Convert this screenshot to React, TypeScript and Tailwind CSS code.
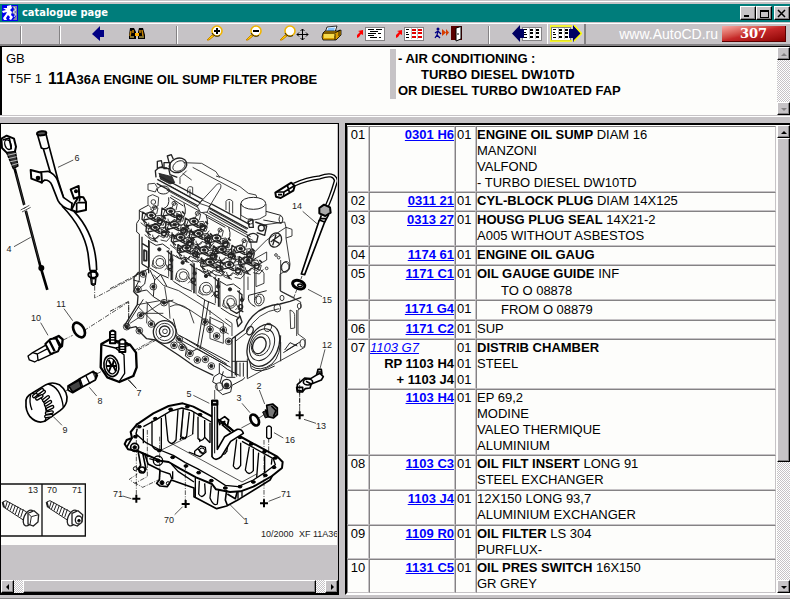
import React from "react";

type PartNo = { text: string; kind?: "link" | "alt" | "plain" };
type Part = {
  ref: string;
  numbers: PartNo[];
  height: string;
  title?: string;
  rest?: string;
  lines?: { text: string; indent?: boolean }[];
};

const parts: Part[] = [
  { ref: "01", numbers: [{ text: "0301 H6" }], height: "h-[66px]", title: "ENGINE OIL SUMP", rest: "DIAM 16", lines: [{ text: "MANZONI" }, { text: "VALFOND" }, { text: "- TURBO DIESEL DW10TD" }] },
  { ref: "02", numbers: [{ text: "0311 21" }], height: "h-[19px]", title: "CYL-BLOCK PLUG", rest: "DIAM 14X125" },
  { ref: "03", numbers: [{ text: "0313 27" }], height: "h-[35px]", title: "HOUSG PLUG SEAL", rest: "14X21-2", lines: [{ text: "A005 WITHOUT ASBESTOS" }] },
  { ref: "04", numbers: [{ text: "1174 61" }], height: "h-[19px]", title: "ENGINE OIL GAUG" },
  { ref: "05", numbers: [{ text: "1171 C1" }], height: "h-[35px]", title: "OIL GAUGE GUIDE", rest: "INF", lines: [{ text: "TO O 08878", indent: true }] },
  { ref: "", numbers: [{ text: "1171 G4" }], height: "h-[20px]", lines: [{ text: "FROM O 08879", indent: true }] },
  { ref: "06", numbers: [{ text: "1171 C2" }], height: "h-[19px]", rest: "SUP" },
  { ref: "07", numbers: [{ text: "1103 G7", kind: "alt" }, { text: "RP 1103 H4", kind: "plain" }, { text: "+ 1103 J4", kind: "plain" }], height: "h-[50px]", title: "DISTRIB CHAMBER", lines: [{ text: "STEEL" }] },
  { ref: "", numbers: [{ text: "1103 H4" }], height: "h-[66px]", rest: "EP 69,2", lines: [{ text: "MODINE" }, { text: "VALEO THERMIQUE" }, { text: "ALUMINIUM" }] },
  { ref: "08", numbers: [{ text: "1103 C3" }], height: "h-[35px]", title: "OIL FILT INSERT", rest: "LONG 91", lines: [{ text: "STEEL EXCHANGER" }] },
  { ref: "", numbers: [{ text: "1103 J4" }], height: "h-[35px]", rest: "12X150 LONG 93,7", lines: [{ text: "ALUMINIUM EXCHANGER" }] },
  { ref: "09", numbers: [{ text: "1109 R0" }], height: "h-[34px]", title: "OIL FILTER", rest: "LS 304", lines: [{ text: "PURFLUX-" }] },
  { ref: "10", numbers: [{ text: "1131 C5" }], height: "h-[34px]", title: "OIL PRES SWITCH", rest: "16X150", lines: [{ text: "GR GREY" }] },
];

const raised = "border border-t-white border-l-white border-b-black border-r-black bg-[#c6c3c6] shadow-[inset_-1px_-1px_#848284]";
const track = "bg-[repeating-conic-gradient(#ffffff_0_25%,#c6c3c6_0_50%)] bg-[length:2px_2px]";

function Triangle({ dir, color }: { dir: "up" | "down" | "left" | "right"; color: string }) {
  const d = { up: "M0 5L3 2L6 5Z", down: "M0 2H6L3 5Z", left: "M4 0V6L1 3Z", right: "M2 0V6L5 3Z" }[dir];
  return <svg width="6" height="6" viewBox="0 0 6 6" aria-hidden="true"><path d={d} fill={color} /></svg>;
}

function ScrollButton({ dir, off }: { dir: "up" | "down" | "left" | "right"; off?: boolean }) {
  return (
    <button aria-label={"Scroll " + dir} className={"flex size-[13px] shrink-0 items-center justify-center " + raised}>
      <Triangle dir={dir} color={off ? "#848284" : "#000"} />
    </button>
  );
}

/* ---------- toolbar icons ---------- */

function Magnifier({ sign }: { sign?: "plus" | "minus" }) {
  return (
    <g>
      <path d="M1 15L6 10L8 11L3 15Z" fill="#ffcf00" stroke="#c68200" strokeWidth="1" />
      <circle cx="11" cy="6" r="5" fill="#fff" stroke="#f0b400" strokeWidth="1.6" />
      <path d="M6 8A5.5 5.5 0 0 0 14 10.500" fill="none" stroke="#000" strokeWidth=".8" />
      {sign && <path d="M8 6H14" stroke="#000" strokeWidth="2" />}
      {sign === "plus" && <path d="M11 3V9" stroke="#000" strokeWidth="2" />}
    </g>
  );
}

function Sheet({ x, red }: { x: number; red?: boolean }) {
  const c = red ? "#e00000" : "#000";
  return (
    <g shapeRendering="crispEdges">
      <rect x={x} y="2" width="19" height="13" fill="#fff" stroke="#848284" />
      <path d={`M${x + 7} 3V14M${x + 13} 3V14`} stroke="#c6c3c6" />
      <path d={`M${x + 2} 4.500h3M${x + 2} 7h2M${x + 2} 9.500h3M${x + 2} 12h3`} stroke="#000" />
      <path d={`M${x + 8} 5h4M${x + 8} 8h4M${x + 8} 12h4M${x + 14} 5h4M${x + 14} 8h4M${x + 14} 12h4`} stroke={c} strokeWidth="1.600" strokeDasharray={red ? undefined : "3 1"} />
    </g>
  );
}

const redArrow = <path d="M1 13V10L4 7L2 6L7 5V10L5 9L3 12Z" fill="#f00" />;

const icons: Record<string, React.ReactNode> = {
  back: <path d="M9 9L17 1V5H21V12H17V16Z" fill="#000084" />,
  find: (
    <g>
      <path d="M8 3H12L14 7V14H7V10ZM17 3H21L23 10V14H16V7Z" fill="#000" />
      <path d="M9 6L8 11M11 5V8M18 5V8M20 5L21 11" stroke="#c68200" strokeWidth="1.500" />
      <path d="M13 8H17V11H13Z" fill="#ffb000" />
      <path d="M8 12H12M17 12H22" stroke="#ffdf63" />
    </g>
  ),
  zoomIn: <g transform="translate(6 0)"><Magnifier sign="plus" /></g>,
  zoomOut: <g transform="translate(6 0)"><Magnifier sign="minus" /></g>,
  zoomFit: (
    <g>
      <g transform="translate(1 0)"><Magnifier /></g>
      <path d="M24.500 4V15M19 9.500H30M22.500 6L24.500 4L26.500 6M22.500 13L24.500 15L26.500 13M21 7.500L19 9.500L21 11.500M28 7.500L30 9.500L28 11.500" fill="none" stroke="#000" />
    </g>
  ),
  print: (
    <g stroke="#000" strokeWidth=".8">
      <path d="M10 2L20 1L18 7L8 8Z" fill="#fff" />
      <path d="M11 3L18 2.500L17 6L10 6.500Z" fill="#84c3ff" stroke="none" />
      <path d="M6 8L8 6H21L24 5V10L19 15H6L5 12Z" fill="#d89b00" />
      <path d="M6 8H18L23 5" fill="none" />
      <path d="M7 10H18M7 12H17" stroke="#ffef63" strokeWidth="1.300" />
      <path d="M18 9V15M22 6V11" />
    </g>
  ),
  notes: (
    <g>
      {redArrow}
      <g shapeRendering="crispEdges">
        <rect x="9" y="2" width="19" height="13" fill="#fff" stroke="#848284" />
        <path d="M12 4.500H18M20 4.500H26M14 6.500H22M12 8.500H20M22 8.500H25M12 10.500H18M14 12.500H21M23 12.500H25" stroke="#000" />
      </g>
    </g>
  ),
  table: <g>{redArrow}<Sheet x={9} red /></g>,
  exit: (
    <g>
      <circle cx="4" cy="4" r="1.500" fill="#000084" />
      <path d="M1 8L4 6L7 9M4 6L3 10L6 13M3 10L1 13" fill="none" stroke="#000084" strokeWidth="1.300" />
      <path d="M8 4L12 7.500L8 11ZM12 4L15 7.500L12 11Z" fill="#d63c00" />
      <path d="M17 1H28V15H17Z" fill="#5a0000" />
      <path d="M22 3L27 1.500V14L22 16Z" fill="#fff" stroke="#000" />
      <path d="M23 9H25" stroke="#000" />
    </g>
  ),
  prev: <g><Sheet x={10} /><path d="M0 8.500L8 0V4H12V13H8V17Z" fill="#000063" /></g>,
  next: <g><g><Sheet x={1} /></g><path d="M31 8.500L23 0V4H19V13H23V17Z" fill="#000063" /><path d="M0 1H22M0 1V16H22M24 0L31.500 8.500L24 16" fill="none" stroke="#ff0" strokeWidth="1.500" /></g>,
};

function Tool({ icon, label, active }: { icon: string; label: string; active?: boolean }) {
  return (
    <button aria-label={label} className={"flex h-full w-[39px] shrink-0 items-center justify-center " + (active ? "border-l border-r-2 border-l-white border-r-[#848284] bg-[#cecbce]" : "")}>
      <svg width="32" height="18" viewBox="0 0 32 18" aria-hidden="true">{icons[icon]}</svg>
    </button>
  );
}

function Separator() {
  return (
    <div className="flex h-full w-[39px] shrink-0 justify-center pt-0.5">
      <div className="w-0.5 border-l border-r border-l-[#848284] border-r-white" />
    </div>
  );
}

/* ---------- exploded view ---------- */

const labels: [string, number, number][] = [
  ["6", 77, 158], ["4", 9, 249], ["14", 297, 206], ["15", 327, 300], ["11", 61, 304], ["10", 36, 318],
  ["7", 139, 393], ["8", 100, 401], ["9", 65, 430], ["12", 327, 345], ["5", 189, 394], ["3", 239, 398],
  ["2", 259, 386], ["13", 321, 426], ["16", 290, 440], ["71", 118, 494], ["71", 286, 494], ["70", 169, 520],
  ["1", 246, 521], ["13", 33, 490], ["70", 52, 490], ["71", 77, 490],
];

function Injector({ x, y }: { x: number; y: number }) {
  return (
    <g transform={`translate(${x} ${y})`}>
      <path d="M-30 8L-22 -14L-4 -20L8 -6L22 -8L30 8L20 24L4 16L-8 28L-24 22Z" />
      <ellipse cx="-6" cy="-8" rx="13" ry="9" strokeWidth="4" />
      <ellipse cx="-6" cy="-8" rx="6" ry="4" fill="#222" />
      <path d="M-2 -18L4 -34L14 -30L10 -12" />
      <circle cx="4" cy="-32" r="6" />
      <path d="M-28 6L-10 2L6 10L28 6M-20 -10L-32 -18L-34 4L-20 16" strokeWidth="4" />
      <path d="M12 -2L34 8L30 22L12 16Z" />
      <circle cx="20" cy="10" r="7" strokeWidth="4" />
      <path d="M-14 14A9 9 0 1 0 4 18M-38 14L-18 30L2 36M10 30L28 34L40 20" />
      <path d="M-4 -2L8 6M-12 24L-4 34M28 -8L36 0" strokeWidth="5" />
    </g>
  );
}

function Port({ x, y }: { x: number; y: number }) {
  return (
    <g transform={`translate(${x} ${y})`}>
      <path d="M-30 -62V16M28 -36V44" />
      <path d="M-30 -62L-10 -50L10 -54L32 -38M-28 18L0 36L28 48" strokeWidth="3" />
      <circle r="19" />
      <circle cx="2" cy="1" r="12" />
      <path d="M-18 -6L-22 12L-8 20M18 4L24 16L16 24" />
      <circle cx="0" cy="-38" r="5" fill="#222" />
      <circle cx="32" cy="14" r="6" strokeWidth="4" />
      <circle cx="36" cy="-6" r="5" fill="#444" />
      <path d="M22 -34L36 -22L34 -6M24 20L40 30" strokeWidth="4" />
    </g>
  );
}

function Engine() {
  return (
    <>
      <g transform="translate(120 140) scale(.33333)" fill="none" stroke="#222" strokeWidth="2.600" strokeLinejoin="round">
        {/* camshaft cover */}
        <path d="M190 68L245 70L288 95L296 108L360 140L385 160L408 165L412 178" />
        <path d="M188 100L215 120M218 82L350 152M200 92L180 112V132M300 112L288 108M362 190V240" />
        <ellipse cx="174" cy="76" rx="27" ry="21" strokeWidth="4" transform="rotate(-22 174 76)" />
        <ellipse cx="177" cy="78" rx="20" ry="14" transform="rotate(-32 177 78)" />
        <path d="M148 70L142 48L154 44L160 58M146 85L150 104L172 112M132 68H150V86H132Z" strokeWidth="4" />
        <path d="M108 112L106 92L118 82L142 84M112 64L124 62L128 80L112 86Z" strokeWidth="4" />
        <path d="M84 132L104 130L112 142L106 156L84 150ZM84 170L98 164L116 172L114 198L94 204L84 194Z" />
        <circle cx="100" cy="186" r="7" /><ellipse cx="130" cy="150" rx="18" ry="12" strokeWidth="3" />
        <path d="M116 100L156 110L164 128L150 132L120 116" fill="#333" />
        {/* rail */}
        <path d="M118 108L390 254M112 118L384 266M110 130L235 198M268 214L382 278" strokeWidth="4" />
        <path d="M150 138L236 186M264 204L380 268M140 150L392 290M152 166L400 302" />
        <path d="M238 190L292 132Q306 128 302 144L268 200ZM232 200L246 180L272 192L262 216L242 218Z" fill="#fff" />
        <path d="M203 160V146Q206 136 218 142V164M318 210V184Q326 172 338 184V220M210 148V170M328 184V218" />
        {/* filler cap and outlet */}
        <path d="M363 192V226Q400 254 438 226V192" fill="#fff" />
        <ellipse cx="400" cy="190" rx="37" ry="18" fill="#fff" strokeWidth="3" />
        <path d="M438 214L482 226Q494 236 484 250L430 240M482 226Q472 238 482 250" strokeWidth="3" />
        <path d="M384 246L398 238L400 262H388ZM382 288Q400 272 414 288L410 306H388ZM406 246L440 258L434 286L410 278" strokeWidth="4" />
        <circle cx="392" cy="244" r="8" /><circle cx="424" cy="264" r="9" strokeWidth="4" />
        {/* cylinder head ends */}
        <path d="M84 196L58 210V238L50 250V276L58 282V420L40 455M90 206L100 214M58 212L82 226" strokeWidth="3" />
        <path d="M430 255L494 246L498 262L516 268V288L498 294L510 372L508 388L480 402M498 262L440 300L372 368V480M498 294V262M480 402V452L524 474" />
        <ellipse cx="466" cy="300" rx="18" ry="22" strokeWidth="4" transform="rotate(25 466 300)" />
        <path d="M452 306L480 286M458 316L468 284M478 310L458 298" strokeWidth="4" />
        <ellipse cx="496" cy="380" rx="12" ry="16" transform="rotate(25 496 380)" />
        <circle cx="468" cy="345" r="4" /><circle cx="476" cy="353" r="4" /><circle cx="440" cy="385" r="4" />
        <path d="M374 372L398 360L440 336V360L404 380L372 400M404 380V480M408 420V400Q422 380 432 400V430L408 440ZM384 410V450" />
        <path d="M146 172Q150 200 130 206M192 190Q204 226 182 238M258 224Q270 258 250 272M326 262Q338 296 316 308M388 296Q402 328 384 344M150 172L190 198M262 232L316 262" strokeWidth="3" />
        {/* injectors and rocker details */}
        {[[100, 234], [158, 222], [112, 270], [170, 262], [228, 252], [188, 300], [242, 288], [296, 302], [206, 332], [258, 338], [312, 336], [368, 334], [276, 374], [334, 382], [390, 368]].map(([x, y]) => <Injector key={`${x}-${y}`} x={x} y={y} />)}
        {/* intake ports */}
        {[[118, 366], [188, 406], [258, 446], [330, 486]].map(([x, y]) => <Port key={x} x={x} y={y} />)}
        <path d="M66 290V372M86 300V400M66 310L86 322M66 372L86 384" strokeWidth="4" />
        <path d="M72 330V362H80V334ZM154 332V420M222 370V460M296 414V500" strokeWidth="5" />
      </g>
      <g transform="translate(110 260) scale(.33333)" fill="none" stroke="#222" strokeWidth="2.600" strokeLinejoin="round">
        {/* block and timing side */}
        <path d="M86 36L72 52V96L84 108L82 134L44 196L50 206L78 200L96 222L110 236L136 240L205 285L252 318L310 346" strokeWidth="4" />
        <path d="M96 34L108 50L104 72L90 84M120 30L134 60L130 110L162 130L190 120M70 60L92 66M80 96L110 90L130 110M100 118L50 196M108 124L130 150L190 190M134 60L152 44L170 78" strokeWidth="3" />
        <path d="M82 134L150 122M84 140L130 186M60 190L152 130L160 120M90 160H160M112 130L110 190M176 120L180 176M164 80L172 130" />
        <path d="M130 44L160 76L206 92L270 132L330 176L362 200M176 120L240 150L300 190L356 222M180 140Q210 124 238 150L252 190" />
        <path d="M78 46L116 26M284 120L276 176L262 262M296 124L286 182L270 268M202 224L190 176M204 224L358 306M200 234L354 318" strokeWidth="3" />
        {[[100, 42], [84, 88], [130, 80], [162, 128], [92, 166], [124, 192], [88, 212], [50, 200], [208, 238], [192, 256], [216, 262], [285, 186], [300, 208], [320, 228], [340, 210], [356, 244], [286, 298], [304, 318], [240, 280], [262, 300]].map(([x, y]) => (
          <g key={`${x}-${y}`}><circle cx={x} cy={y} r="10" /><circle cx={x} cy={y} r="5" fill="#222" /></g>
        ))}
        <circle cx="164" cy="216" r="34" strokeWidth="4" fill="#fff" /><circle cx="164" cy="216" r="26" /><circle cx="164" cy="214" r="16" strokeWidth="4" /><circle cx="165" cy="214" r="7" />
        <path d="M198 224L204 236L230 262L226 288L240 298M208 250L244 276L262 266M262 266L320 300L362 322M226 236L350 312" strokeWidth="3" />
        <path d="M300 172L340 190V250L300 236ZM346 176L366 190V228" />
        <path d="M352 128L362 150L380 160L396 150V110M380 180L390 168L396 186L384 200Z" strokeWidth="4" />
        {/* bell housing */}
        <path d="M366 236V350M376 230V346M366 236L402 210Q430 140 510 132L540 124L574 112" strokeWidth="4" />
        <path d="M376 244L410 218Q440 156 508 146M512 0V94L572 126V144L564 150V222L586 238L584 262L566 272L412 356V296M560 150V228" />
        <path d="M540 150Q556 156 554 170V204L542 206Z" />
        <ellipse cx="460" cy="256" rx="45" ry="66" strokeWidth="4" transform="rotate(24 460 256)" />
        <ellipse cx="456" cy="254" rx="35" ry="50" strokeWidth="3" transform="rotate(24 456 254)" />
        <ellipse cx="452" cy="254" rx="27" ry="34" transform="rotate(24 452 254)" />
        <ellipse cx="448" cy="256" rx="19" ry="26" strokeWidth="4" transform="rotate(24 448 256)" />
        <path d="M424 318Q450 338 486 312Q514 286 512 226M418 300L424 326Q450 342 494 318M512 246V304" strokeWidth="3" />
        <ellipse cx="420" cy="212" rx="9" ry="13" strokeWidth="4" transform="rotate(25 420 212)" /><ellipse cx="474" cy="202" rx="10" ry="13" transform="rotate(25 474 202)" />
        <ellipse cx="502" cy="144" rx="10" ry="12" /><ellipse cx="516" cy="114" rx="6" ry="8" /><ellipse cx="568" cy="138" rx="6" ry="8" /><ellipse cx="578" cy="250" rx="8" ry="12" />
        <ellipse cx="448" cy="120" rx="14" ry="18" transform="rotate(20 448 120)" /><ellipse cx="446" cy="120" rx="8" ry="12" /><ellipse cx="526" cy="22" rx="11" ry="15" />
        <path d="M436 140Q410 128 416 106L470 92M524 270L540 248L562 258M520 278L562 252M528 272L570 246" strokeWidth="3" />
        <path d="M366 304H412V352M380 304V350M390 308V350M400 308V350M328 310V340L312 350L308 366L320 372L322 390L338 404L362 396L366 376L400 358L404 352M328 310L352 328L388 346M328 340L350 352L376 352M340 334L330 370" strokeWidth="3" />
        <circle cx="328" cy="380" r="12" /><circle cx="350" cy="372" r="14" strokeWidth="4" /><circle cx="350" cy="376" r="7" fill="#222" />
        <path d="M0 86L116 26M0 154L56 124V196M84 270L160 228M300 190V150" strokeDasharray="14 4 3 4" />
      </g>
    </>
  );
}

function OilPan() {
  return (
    <g transform="translate(110 390) scale(.33333)" fill="none" stroke="#000" strokeWidth="3" strokeLinejoin="round">
      {/* flange */}
      <path d="M80 104L62 126L66 144L50 150L44 162L54 178L86 184L150 212L176 216L210 236L258 262L306 282L318 298L360 306L392 304L430 290L486 258L516 234L518 216L502 200L388 138L362 116L330 92L250 50L218 40L176 48L130 70Z" strokeWidth="6" />
      <path d="M82 116L78 132L108 158L150 180L190 196L226 218L262 236L312 264L346 286L384 290L430 270L470 244L496 224L490 206L396 154M100 110L140 88L180 64L216 54L244 62L304 96" strokeWidth="4" />
      {[[88, 110], [136, 86], [182, 58], [232, 50], [270, 74], [340, 100], [390, 142], [424, 162], [464, 184], [496, 204], [492, 232], [466, 256], [430, 276], [390, 290], [346, 294], [304, 272], [266, 248], [228, 228], [188, 202], [148, 182], [76, 140]].map(([x, y]) => <ellipse key={`${x}-${y}`} cx={x} cy={y} rx="6" ry="4" fill="#000" />)}
      {/* inner walls */}
      <path d="M100 116V160M126 92V166Q136 186 154 178V84M166 74L174 152Q184 170 198 150L204 60M220 58L212 140Q222 154 230 138L238 66M252 66L248 132M264 80V146Q274 158 284 142V90M300 98V158M358 140L350 186M380 148L370 228Q380 246 392 226V158M418 170L406 240Q416 260 430 242V176M446 188L440 262M464 196V248M486 206L484 224" strokeWidth="4" />
      <path d="M180 158L396 276M150 182L212 152L250 132M396 276L440 252M220 54L214 140M344 150L358 140" strokeWidth="2" />
      <path d="M210 150Q214 136 226 146L230 138M268 146L270 156M284 142L300 158M332 184Q342 202 350 184" strokeWidth="4" />
      {/* pick-up */}
      <path d="M254 184L272 168L286 172L288 186L270 200L254 194ZM264 178L280 192M236 186L256 194" strokeWidth="4" /><circle cx="276" cy="182" r="8" />
      <path d="M306 32V200Q316 216 334 200L362 154L400 130Q396 116 382 118L344 140L322 178V32Z" fill="#fff" strokeWidth="5" />
      <path d="M308 40H320M314 50V190" strokeWidth="3" /><path d="M306 32H322V44H306Z" strokeWidth="6" />
      <path d="M330 106L326 92L344 80L356 90L352 108L372 124M336 104L362 126M330 100L346 94" strokeWidth="5" />
      {/* lower body */}
      <path d="M66 144L50 172M84 182L92 226L84 238L100 248L108 238L98 188M104 190L114 222L150 240L148 270L140 280L150 288L172 290L184 270L252 294V320L320 356L350 348L390 326L480 270L488 256M350 300L346 330L352 346M382 304L376 326L352 312" strokeWidth="5" />
      <path d="M256 264V322M268 272L266 312Q276 328 286 310L284 280M304 286L300 324Q310 350 322 342L326 300M384 304V326M396 304V320" strokeWidth="4" />
      <path d="M184 222L204 244L252 276M150 242L180 252L186 268M118 206L148 214M92 188L116 200M188 244V268" strokeWidth="4" />
      <circle cx="74" cy="172" r="12" strokeWidth="5" /><circle cx="74" cy="172" r="5" fill="#000" /><circle cx="144" cy="212" r="14" strokeWidth="4" /><circle cx="144" cy="212" r="5" fill="#000" />
      <circle cx="96" cy="240" r="9" strokeWidth="5" /><circle cx="76" cy="236" r="6" /><circle cx="156" cy="278" r="6" fill="#000" /><circle cx="174" cy="280" r="5" />
      <g strokeWidth="2" strokeDasharray="14 4 3 4">
        <path d="M79 100V326M112 120V260L74 280L58 268L82 252M149 140V268L98 292L74 278M226 226V340M462 150V340M476 144V196M569 0V76" />
      </g>
      {[[79, 326], [227, 342], [462, 340], [569, 76]].map(([x, y]) => <path key={x} d={`M${x - 12} ${y}H${x + 12}M${x} ${y - 12}V${y + 12}`} strokeWidth="6" />)}
      {/* drain plug, washer and pin */}
      <path d="M394 114L424 98M444 86L462 74" strokeWidth="2" />
      <ellipse cx="434" cy="90" rx="11" ry="18" strokeWidth="8" transform="rotate(-30 434 90)" />
      <path d="M458 66L478 58L486 76L466 84Z" fill="#333" /><path d="M470 46L488 42L502 54L502 74L490 84L474 80Z" strokeWidth="5" fill="#777" /><path d="M484 48L498 62L490 80M466 58L474 78" strokeWidth="5" />
      <path d="M470 112Q477 104 484 112V142Q477 150 470 142Z" fill="#fff" strokeWidth="4" />
      {/* leaders */}
      <path d="M314 0V28M250 16L298 40M396 40L420 68M448 0L464 42M492 128L520 144M582 88L618 100M38 318L64 326M476 334L512 320M194 374L218 350M360 344L404 388" strokeWidth="2" />
    </g>
  );
}

function Bolt({ x, socket }: { x: number; socket?: boolean }) {
  return (
    <g transform={`translate(${x} 0)`} stroke="#222" strokeWidth="3" fill="#fff">
      <path d="M8 126L18 122L80 156L70 180L12 142Z" />
      <path d="M22 124L16 144M30 128L22 148M38 132L30 152M46 136L38 158M54 140L46 162M62 144L54 168M70 148L62 172" strokeWidth="3" />
      <path d="M8 126L12 142" strokeWidth="6" />
      <ellipse cx="86" cy="174" rx="14" ry="25" strokeWidth="4" transform="rotate(24 86 174)" />
      <path d="M84 160L102 152L116 164L114 186L100 198L84 192Z" strokeWidth="4" />
      {socket ? <><ellipse cx="104" cy="180" rx="10" ry="12" strokeWidth="4" /><circle cx="105" cy="182" r="4" fill="#000" /></> : <path d="M84 160L94 170L116 164M94 170L90 194" />}
    </g>
  );
}

function ExplodedView() {
  return (
    <svg width="336" height="421" viewBox="1 124 336 421" role="img" aria-label="Engine oil sump, exploded view" className="block shrink-0 bg-[#fdfdfb]">
      {/* dipstick and guide tube */}
      <g transform="translate(0 120) scale(.33333)" fill="none" stroke="#000" strokeWidth="4" strokeLinejoin="round">
        <path d="M4 56L20 47L42 56L48 80L44 98L20 98L6 84Z" fill="#fff" strokeWidth="6" />
        <path d="M8 60L28 54L34 88" strokeWidth="5" /><ellipse cx="24" cy="74" rx="9" ry="15" transform="rotate(-20 24 74)" />
        <path d="M20 98L46 94L54 138L40 146Z" fill="#333" /><path d="M22 106L48 100M24 116L50 110M28 126L54 120M34 136L54 130" stroke="#fff" strokeWidth="2" />
        <path d="M44 146L122 442L142 510" strokeWidth="8" /><path d="M48 160L118 424" stroke="#999" strokeWidth="1" />
        <path d="M62 264L90 252M64 274L92 262" stroke="#fff" strokeWidth="8" /><path d="M62 270L88 256M66 276L92 262" strokeWidth="2" />
        <circle cx="124" cy="444" r="7" fill="#000" />
        <path d="M194 250Q260 320 272 446L286 446Q292 350 220 270Z" fill="#fff" stroke="none" />
        <path d="M186 258Q252 326 264 400L270 452M222 274Q288 344 290 450" strokeWidth="5" />
        <ellipse cx="279" cy="464" rx="14" ry="9" strokeWidth="6" fill="#fff" /><path d="M272 474L274 492Q282 500 286 492L288 474" strokeWidth="4" />
        <path d="M112 42L124 84L130 86L154 168L180 246L218 250M138 42L148 82L174 180L192 236L206 246" strokeWidth="5" />
        <path d="M124 84Q138 90 148 80" /><ellipse cx="125" cy="40" rx="14" ry="6" fill="#555" strokeWidth="6" transform="rotate(-6 125 40)" />
        <path d="M122 156L144 154Q164 162 172 180L190 232L216 250L214 270Q184 262 174 242L156 196Q150 180 134 180L124 188Z" fill="#fff" strokeWidth="5" />
        <path d="M92 150L124 158L126 188L94 176Z" fill="#fff" strokeWidth="6" /><circle cx="114" cy="174" r="5" fill="#000" />
        <path d="M212 208L236 198L238 230L222 236ZM224 250L236 230L250 232L258 246V270L230 276L214 270Z" fill="#fff" strokeWidth="6" /><circle cx="228" cy="214" r="4" fill="#000" /><path d="M232 248H256M230 248V274M240 232L238 244" strokeWidth="5" />
        <path d="M220 120L174 142M42 380L92 352" strokeWidth="2" />
      </g>
      {/* oil filter, exchanger, switch */}
      <g transform="translate(0 270) scale(.33333)" fill="none" stroke="#000" strokeWidth="4" strokeLinejoin="round">
        <path d="M284 48V84L410 18M190 210L218 196M252 182L386 96V170M198 362L216 352M290 312L320 296M380 254L460 210" strokeWidth="2" strokeDasharray="14 4 3 4" />
        <ellipse cx="237" cy="180" rx="15" ry="24" strokeWidth="8" transform="rotate(-32 237 180)" />
        <path d="M84 258L98 248L112 252L114 270L104 276L88 270ZM98 248L140 224L160 250L114 272M112 252L150 232" fill="#fff" />
        <path d="M136 222L150 208L168 204L182 226L174 244L152 252Z" fill="#fff" strokeWidth="6" /><path d="M160 206L176 198L188 208L186 228L176 236M168 204L180 230M148 212L164 244" strokeWidth="7" />
        <path d="M304 222L330 208L390 224L408 248L410 292L400 318L358 336L322 322L302 292Z" fill="#fff" strokeWidth="7" />
        <path d="M304 224L346 234L372 254L374 310L358 334M346 234L390 226" /><ellipse cx="334" cy="288" rx="22" ry="32" strokeWidth="5" transform="rotate(-12 334 288)" /><ellipse cx="334" cy="288" rx="15" ry="24" strokeWidth="4" transform="rotate(-12 334 288)" />
        <path d="M326 270L334 286L326 306M342 270L338 284L348 304M318 288H350" strokeWidth="6" />
        <path d="M330 186Q338 178 346 186V220H330ZM358 212Q368 204 376 212V246H358Z" fill="#fff" strokeWidth="6" /><path d="M330 194H346M330 202H346M330 210H346M358 222H376M358 230H376M358 238H376M346 216L356 220M376 216L384 220" strokeWidth="4" />
        <path d="M204 348L236 328L280 304L292 316L286 330L246 352L218 368L204 360Z" fill="#fff" strokeWidth="5" />
        <path d="M206 348L238 330L244 352L218 366ZM276 306L290 310L286 328" fill="#444" strokeWidth="5" /><path d="M258 318L270 342M240 326L248 350" />
        <path d="M78 398Q76 380 96 370L138 344Q156 334 178 344Q206 366 200 394Q196 410 180 422L134 454Q110 462 90 440Q76 422 78 398Z" fill="#fff" strokeWidth="5" />
        <path d="M96 370Q132 376 138 420Q142 440 134 454M144 342Q182 350 190 412M92 374Q86 396 96 420" />
        {[[108, 374, 38], [126, 370, 40], [118, 382, 30], [138, 386, 38], [144, 400, 32], [150, 414, 26], [148, 428, 10], [146, 438, 8], [120, 364, 34]].map(([x, y, r]) => <rect key={`${x}-${y}`} x={x - 12} y={y - 4} width="24" height="8" rx="4" fill="#fff" strokeWidth="4" transform={`rotate(${-r} ${x} ${y})`} />)}
        <path d="M192 116L218 152M122 158L144 196M386 328L408 354M268 352L290 378M160 440L186 466" strokeWidth="2" />
        <path d="M272 2H288L290 18L282 26L274 24Z" strokeWidth="5" /><path d="M276 26V42H286V26" />
      </g>
      <Engine />
      {/* level sensor */}
      <g transform="translate(120 140) scale(.33333)" fill="none" stroke="#000" strokeWidth="4" strokeLinejoin="round">
        <path d="M522 134Q560 116 600 112Q642 96 648 122Q640 150 630 176L620 200" strokeWidth="13" />
        <path d="M522 134Q560 116 600 112Q642 96 648 122Q640 150 630 176L620 200" stroke="#fff" strokeWidth="5" />
        <path d="M466 158L514 128L524 138L520 152L482 174L468 170Z" fill="#fff" strokeWidth="6" /><path d="M468 156L492 156L490 170M492 156L522 138M502 136L508 156M474 164H486" strokeWidth="5" />
        <path d="M598 204L612 194L630 202L632 218L616 228L598 220Z" fill="#aaa" strokeWidth="6" /><path d="M604 226L598 244M626 224L614 246M598 236H618" strokeWidth="5" />
        <path d="M598 240L544 402L554 404L614 246Z" fill="#fff" strokeWidth="5" />
        <ellipse cx="536" cy="434" rx="19" ry="12" strokeWidth="9" transform="rotate(20 536 434)" /><ellipse cx="540" cy="436" rx="7" ry="4" />
        <path d="M546 408L540 426M530 450L520 476" strokeDasharray="10 4" strokeWidth="2" /><path d="M548 214L592 252M564 448L606 470" strokeWidth="2" />
      </g>
      {/* clamp */}
      <g transform="translate(110 260) scale(.33333)" fill="none" stroke="#000" strokeWidth="5" strokeLinejoin="round">
        <path d="M562 374L584 354L602 356L618 346L630 340L640 350L634 360L604 372L600 384L586 386L578 394L562 390Z" fill="#fff" /><path d="M620 344L624 328H634L636 344M622 336H634M560 382H578V396H562Z" /><ellipse cx="594" cy="366" rx="14" ry="9" /><path d="M588 364L604 372" />
        <path d="M645 268L630 326" strokeWidth="2" /><path d="M569 356V440" strokeWidth="2" strokeDasharray="14 5" /><path d="M54 360L80 386" strokeWidth="2" />
      </g>
      <OilPan />
      {/* screw legend */}
      <g transform="translate(0 460) scale(.33333)">
        <path d="M3 72H256V228H3M126 72V228" fill="none" stroke="#111" strokeWidth="4" />
        <Bolt x={0} /><Bolt x={132} socket />
      </g>
      <g fill="#222" fontFamily="Liberation Sans, Arial, sans-serif" fontSize="9">
        <g textAnchor="middle">{labels.map(([t, x, y]) => <text key={`${t}-${x}`} x={x} y={y + 3}>{t}</text>)}</g>
        <text x="261" y="537">10/2000</text>
        <text x="299" y="537">XF 11A36A</text>
      </g>
    </svg>
  );
}

/* ---------- window ---------- */

function Emblem() {
  return (
    <svg width="16" height="16" viewBox="0 0 16 16" aria-hidden="true">
      <rect width="16" height="16" fill="#0000f0" />
      <path d="M10 1H15V15H11L14 11L10 8L12 4Z" fill="#8486a0" />
      <path d="M5 1L9 0L10 3L8 5L10 7L9 10L11 12L9 15L7 14L8 12L6 10L4 13L5 15L2 15L1 13L4 9L5 7L1 8L0 6L4 5L1 3L5 3Z" fill="#fff" />
      <path d="M12 2L14 5L11 7L14 9L12 12" stroke="#dcdcf0" fill="none" />
    </svg>
  );
}

function WindowButton({ label, children }: { label: string; children: React.ReactNode }) {
  return (
    <button aria-label={label} className={"flex h-[14px] w-4 items-center justify-center " + raised}>
      <svg width="10" height="9" viewBox="0 0 10 9" aria-hidden="true" fill="none" stroke="#000" shapeRendering="crispEdges">{children}</svg>
    </button>
  );
}

function PartNumber({ text, kind = "link" }: PartNo) {
  if (kind === "plain") return <div className="font-bold">{text}</div>;
  if (kind === "alt") return <div className="text-left"><a href="#part" className="italic text-[#0000ff] underline">{text}</a></div>;
  return <a href="#part" className="font-bold text-[#0000ff] underline">{text}</a>;
}

const cell = "border border-b-[#c6c3c6] border-l-[#848284] border-r-[#c6c3c6] border-t-[#848284] p-0 align-top";

export default function App() {
  return (
    <div className="flex min-h-screen flex-col overflow-hidden bg-[#c6c3c6] font-['Liberation_Sans',Arial,sans-serif] text-[13px] leading-4 text-black">
      <div className="mt-px h-[3px] border-t border-white" />
      <header className="flex h-[18px] items-center gap-1 bg-[#007d7b] pl-0.5">
        <Emblem />
        <h1 className="flex-1 font-['DejaVu_Sans_Condensed','DejaVu_Sans',sans-serif] text-[11px] font-bold text-white">catalogue page</h1>
        <div className="flex">
          <WindowButton label="Minimize"><path d="M1 7H6" strokeWidth="2" /></WindowButton>
          <WindowButton label="Maximize"><path d="M1 1H9M1 1V8H9V1" /><path d="M1 2H9" /></WindowButton>
          <div className="ml-0.5"><WindowButton label="Close"><path d="M1 1L8 8M8 1L1 8" strokeWidth="1.500" shapeRendering="auto" /></WindowButton></div>
        </div>
      </header>
      <nav aria-label="Toolbar" className="mt-px flex h-[23px] shrink-0 items-stretch border-b-2 border-t border-b-[#848284] border-t-white pl-px">
        <Separator />
        <Separator />
        <Tool icon="back" label="Back" />
        <Tool icon="find" label="Find" />
        <Separator />
        <Tool icon="zoomIn" label="Zoom in" />
        <Tool icon="zoomOut" label="Zoom out" />
        <Tool icon="zoomFit" label="Zoom and pan" />
        <Tool icon="print" label="Print" />
        <Tool icon="notes" label="Notes" />
        <Tool icon="table" label="Table" />
        <Tool icon="exit" label="Exit" />
        <Separator />
        <Tool icon="prev" label="Previous page" />
        <Tool icon="next" label="Next page" active />
        <div className="flex flex-1 items-center justify-end gap-1 pr-1">
          <span className="text-sm text-white">www.AutoCD.ru</span>
          <span className="flex h-4 w-16 items-center justify-center border-b border-r border-[#5a0000] bg-linear-to-br from-[#f7aaa5] via-[#c62829] to-[#8c0000] font-['DejaVu_Serif',serif] text-[13px] font-bold text-white">307</span>
        </div>
      </nav>

      <section className="flex h-[69px] shrink-0 border-l-2 border-t border-black bg-[#fdfdfb]">
        <div className="w-[388px] shrink-0 pl-1 pt-1">
          <p>GB</p>
          <p className="flex h-6 items-center gap-1 pl-0.5">
            <span className="pr-0.5">T5F 1</span>
            <strong><span className="text-base">11A</span>36A ENGINE OIL SUMP FILTER PROBE</strong>
          </p>
        </div>
        <div className="my-0.5 h-[50px] w-1.5 bg-[#c6c3c6]" />
        <div className="flex-1 pl-0.5 pt-1 font-bold">
          <p>- AIR CONDITIONING :</p>
          <p className="pl-[23px]">TURBO DIESEL DW10TD</p>
          <p>OR DIESEL TURBO DW10ATED FAP</p>
        </div>
        <div className={"flex flex-col justify-between " + track}>
          <ScrollButton dir="up" off />
          <ScrollButton dir="down" off />
        </div>
      </section>

      <main className="mt-px flex flex-1 gap-1.5 border-t border-white pt-1.5">
        <section aria-label="Drawing" className="mb-[3px] flex w-[339px] shrink-0 flex-col border border-b-2 border-black">
          <ExplodedView />
          <div className="flex-1" />
          <div className={"flex gap-[9px] " + track}>
            <ScrollButton dir="left" />
            <div className={"h-[13px] flex-1 " + raised} />
            <ScrollButton dir="right" />
          </div>
        </section>

        <section aria-label="Parts" className="mb-[3px] flex min-w-0 flex-1 border-b-2 border-l-2 border-t-2 border-b-white border-l-black border-t-black bg-[#fdfdfb]">
          <div className="min-w-0 flex-1 pb-0 pr-px pt-px">
            <table className="w-full table-fixed border-separate border-spacing-0">
              <colgroup>
                <col className="w-[22px]" />
                <col className="w-[86px]" />
                <col className="w-[21px]" />
                <col />
              </colgroup>
              <tbody>
                {parts.map((p, i) => (
                  <tr key={i} className={p.height}>
                    <td className={cell + " text-center"}>{p.ref}</td>
                    <td className={cell + " text-right"}>{p.numbers.map((n) => <PartNumber key={n.text} {...n} />)}</td>
                    <td className={cell + " pl-px"}>{p.numbers.map((n) => <div key={n.text}>01</div>)}</td>
                    <td className={cell}>
                      {(p.title || p.rest) && <div>{p.title && <strong>{p.title}</strong>} {p.rest}</div>}
                      {p.lines?.map((l) => <div key={l.text} className={l.indent ? "pl-6 pt-px" : ""}>{l.text}</div>)}
                    </td>
                  </tr>
                ))}
              </tbody>
            </table>
          </div>
          <div className={"flex flex-col " + track}>
            <ScrollButton dir="up" />
            <div className={"h-[324px] w-[13px] " + raised} />
            <div className="flex-1" />
            <ScrollButton dir="down" />
          </div>
        </section>
      </main>
      <div className="h-px bg-[#848284]" />
    </div>
  );
}
